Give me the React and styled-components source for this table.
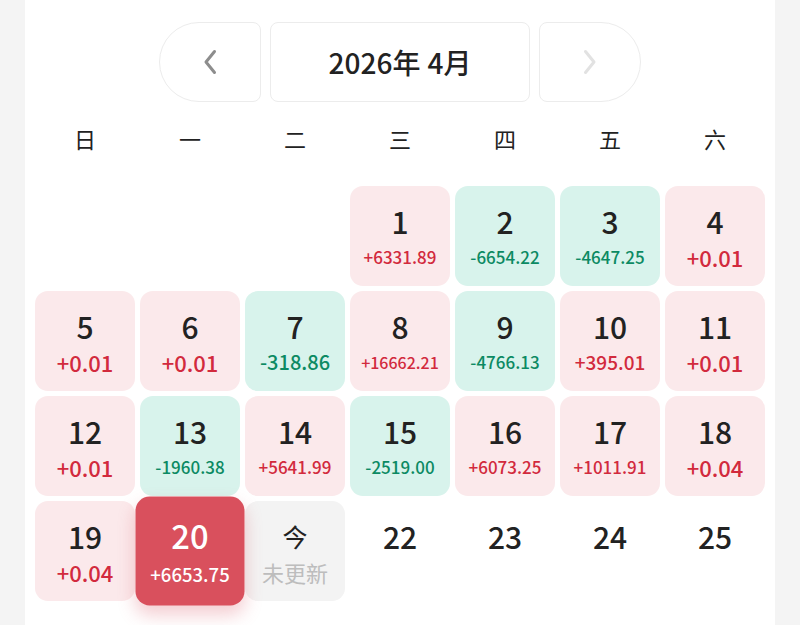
import React from "react";
import styled, { createGlobalStyle } from "styled-components";

const Global = createGlobalStyle`
  html, body { margin: 0; padding: 0; overflow: hidden; background: #f4f4f4; }
  body { font-family: "Noto Sans CJK SC", "Noto Sans", sans-serif; }
`;

const Page = styled.div`
  min-height: 100vh;
  display: flex;
  justify-content: center;
`;

const Panel = styled.div`
  width: 750px;
  background: #ffffff;
  padding: 22px 10px 20px;
  box-sizing: border-box;
`;

const Header = styled.div`
  display: flex;
  justify-content: center;
  gap: 9px;
`;

const NavButton = styled.button`
  width: 102px;
  height: 80px;
  box-sizing: border-box;
  border: 1px solid #ececec;
  background: #fff;
  display: flex;
  align-items: center;
  justify-content: center;
  padding: 0;
  border-radius: ${(p) => (p.$side === "left" ? "40px 8px 8px 40px" : "8px 40px 40px 8px")};
  color: ${(p) => (p.$disabled ? "#e2e2e2" : "#8d8d8d")};
  cursor: pointer;
`;

const Title = styled.div`
  width: 260px;
  height: 80px;
  box-sizing: border-box;
  border: 1px solid #ececec;
  border-radius: 8px;
  display: flex;
  align-items: center;
  justify-content: center;
  font-family: "Noto Sans CJK SC", sans-serif;
  font-size: 28px;
  font-weight: 500;
  color: #222;
  gap: 7px;
`;

const Grid = styled.div`
  display: grid;
  grid-template-columns: repeat(7, 100px);
  column-gap: 5px;
  row-gap: 5px;
`;

const WeekRow = styled(Grid)`
  margin-top: 16px;
  height: 40px;
  align-items: center;
`;

const WeekDay = styled.div`
  text-align: center;
  font-size: 22px;
  color: #222;
  line-height: 40px;
`;

const Days = styled(Grid)`
  margin-top: 28px;
`;

const palette = {
  up: { bg: "#fbe9eb", fg: "#d22a3d" },
  down: { bg: "#d8f3ec", fg: "#0c8a63" },
  today: { bg: "#f3f3f3", fg: "#bdbdbd" },
  sel: { bg: "#d9505d", fg: "#ffffff" },
  none: { bg: "transparent", fg: "#222" },
};

const Cell = styled.div`
  height: 100px;
  border-radius: 13px;
  background: ${(p) => palette[p.$kind].bg};
  display: flex;
  flex-direction: column;
  align-items: center;
  box-sizing: border-box;
  padding-top: 20px;
  ${(p) =>
    p.$kind === "sel"
      ? `transform: scale(1.09); box-shadow: 0 8px 16px rgba(217, 80, 93, 0.28); position: relative; z-index: 1;`
      : ""}
`;

const DayNum = styled.div`
  height: 30px;
  line-height: 30px;
  font-size: 30px;
  font-weight: 500;
  color: ${(p) => (p.$kind === "sel" ? "#fff" : "#222")};
`;

const TodayChar = styled.div`
  height: 30px;
  line-height: 30px;
  font-size: 25px;
  color: #222;
`;

const Value = styled.div`
  margin-top: 9px;
  height: 24px;
  line-height: 24px;
  font-weight: 500;
  color: ${(p) => palette[p.$kind].fg};
  white-space: nowrap;
`;

const Pending = styled.div`
  margin-top: 9px;
  height: 24px;
  line-height: 24px;
  font-size: 22px;
  color: #bdbdbd;
`;

const Chevron = ({ dir }) => (
  <svg width="14" height="26" viewBox="0 0 14 26" fill="none">
    <path
      d={dir === "left" ? "M11.5 2.5 L3 13 L11.5 23.5" : "M2.5 2.5 L11 13 L2.5 23.5"}
      stroke="currentColor"
      strokeWidth="3"
      strokeLinecap="round"
      strokeLinejoin="round"
    />
  </svg>
);

const data = {
  1: "+6331.89", 2: "-6654.22", 3: "-4647.25", 4: "+0.01",
  5: "+0.01", 6: "+0.01", 7: "-318.86", 8: "+16662.21", 9: "-4766.13", 10: "+395.01", 11: "+0.01",
  12: "+0.01", 13: "-1960.38", 14: "+5641.99", 15: "-2519.00", 16: "+6073.25", 17: "+1011.91", 18: "+0.04",
  19: "+0.04", 20: "+6653.75",
};

const sizeFor = (v) => {
  const n = v.length;
  if (n <= 5) return 22;
  if (n === 7) return v.startsWith("-") ? 20 : 19;
  if (n === 8) return 17;
  return 16;
};

const weekDays = ["日", "一", "二", "三", "四", "五", "六"];

export default function App() {
  const cells = [];
  for (let i = 0; i < 3; i++) cells.push(<div key={"b" + i} />);
  for (let d = 1; d <= 25; d++) {
    const v = data[d];
    if (d === 20) {
      cells.push(
        <Cell key={d} $kind="sel">
          <DayNum $kind="sel">{d}</DayNum>
          <Value $kind="sel" style={{ fontSize: sizeFor(v) }}>{v}</Value>
        </Cell>
      );
    } else if (d === 21) {
      cells.push(
        <Cell key={d} $kind="today">
          <TodayChar>今</TodayChar>
          <Pending>未更新</Pending>
        </Cell>
      );
    } else if (v) {
      const kind = v.startsWith("-") ? "down" : "up";
      cells.push(
        <Cell key={d} $kind={kind}>
          <DayNum>{d}</DayNum>
          <Value $kind={kind} style={{ fontSize: sizeFor(v) }}>{v}</Value>
        </Cell>
      );
    } else {
      cells.push(
        <Cell key={d} $kind="none">
          <DayNum>{d}</DayNum>
        </Cell>
      );
    }
  }

  return (
    <>
      <Global />
      <Page>
        <Panel>
          <Header>
            <NavButton $side="left" aria-label="上个月">
              <Chevron dir="left" />
            </NavButton>
            <Title>
              <span>2026年</span>
              <span>4月</span>
            </Title>
            <NavButton $side="right" $disabled aria-label="下个月">
              <Chevron dir="right" />
            </NavButton>
          </Header>
          <WeekRow>
            {weekDays.map((w) => (
              <WeekDay key={w}>{w}</WeekDay>
            ))}
          </WeekRow>
          <Days>{cells}</Days>
        </Panel>
      </Page>
    </>
  );
}
